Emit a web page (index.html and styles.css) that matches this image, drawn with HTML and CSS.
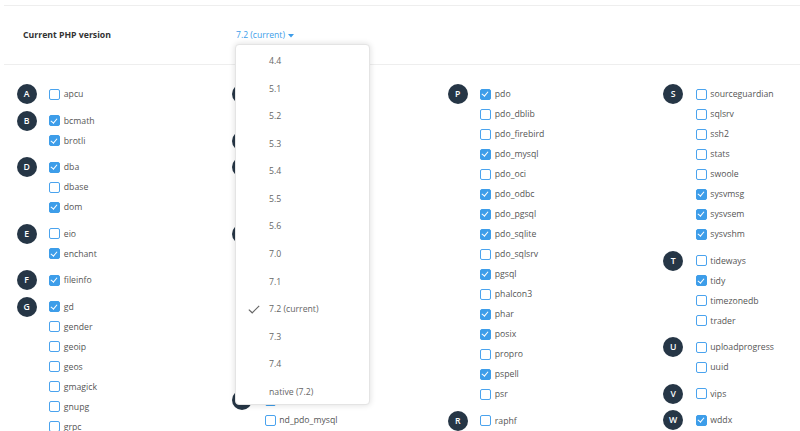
FILE: index.html
```html
<!DOCTYPE html>
<html lang="en">
<head>
<meta charset="utf-8">
<title>PHP Selector</title>
<link rel="stylesheet" href="styles.css">
</head>
<body>
<div class="page">
  <div class="version-row">
    <div class="version-label">Current PHP version</div>
    <div class="selector">
      <span class="selector-value">7.2 (current)</span>
      <svg class="caret" width="6" height="4" viewBox="0 0 6 4"><path d="M0 0 L6 0 L3 3.5 Z" fill="#3d9de9"/></svg>
      <ul class="menu">
        <li>4.4</li>
        <li>5.1</li>
        <li>5.2</li>
        <li>5.3</li>
        <li>5.4</li>
        <li>5.5</li>
        <li>5.6</li>
        <li>7.0</li>
        <li>7.1</li>
        <li class="selected"><svg class="tick" width="12" height="9" viewBox="0 0 12 9"><path d="M0.8 4.6 L4.2 7.8 L11.2 0.8" fill="none" stroke="#666" stroke-width="1.2"/></svg>7.2 (current)</li>
        <li>7.3</li>
        <li>7.4</li>
        <li>native (7.2)</li>
      </ul>
    </div>
  </div>

  <div class="columns">
    <div class="col">
      <div class="group"><span class="letter">A</span><div class="items">
        <label class="item"><span class="box"></span>apcu</label>
      </div></div>
      <div class="group"><span class="letter">B</span><div class="items">
        <label class="item"><span class="box on"></span>bcmath</label>
        <label class="item"><span class="box on"></span>brotli</label>
      </div></div>
      <div class="group"><span class="letter">D</span><div class="items">
        <label class="item"><span class="box on"></span>dba</label>
        <label class="item"><span class="box"></span>dbase</label>
        <label class="item"><span class="box on"></span>dom</label>
      </div></div>
      <div class="group"><span class="letter">E</span><div class="items">
        <label class="item"><span class="box"></span>eio</label>
        <label class="item"><span class="box on"></span>enchant</label>
      </div></div>
      <div class="group"><span class="letter">F</span><div class="items">
        <label class="item"><span class="box on"></span>fileinfo</label>
      </div></div>
      <div class="group"><span class="letter">G</span><div class="items">
        <label class="item"><span class="box on"></span>gd</label>
        <label class="item"><span class="box"></span>gender</label>
        <label class="item"><span class="box"></span>geoip</label>
        <label class="item"><span class="box"></span>geos</label>
        <label class="item"><span class="box"></span>gmagick</label>
        <label class="item"><span class="box"></span>gnupg</label>
        <label class="item"><span class="box"></span>grpc</label>
      </div></div>
    </div>

    <div class="col">
      <div class="group"><span class="letter">J</span><div class="items">
        <label class="item"><span class="box"></span>jsmin</label>
        <label class="item"><span class="box on"></span>json</label>
      </div></div>
      <div class="group"><span class="letter">K</span><div class="items">
        <label class="item"><span class="box"></span>krb5</label>
      </div></div>
      <div class="group"><span class="letter">L</span><div class="items">
        <label class="item"><span class="box"></span>ldap</label>
        <label class="item"><span class="box"></span>luasandbox</label>
        <label class="item"><span class="box"></span>lzf</label>
      </div></div>
      <div class="group"><span class="letter">M</span><div class="items">
        <label class="item"><span class="box"></span>mailparse</label>
        <label class="item"><span class="box on"></span>mbstring</label>
        <label class="item"><span class="box"></span>mcrypt</label>
        <label class="item"><span class="box"></span>memcache</label>
        <label class="item"><span class="box"></span>memcached</label>
        <label class="item"><span class="box"></span>mongodb</label>
        <label class="item"><span class="box"></span>msgpack</label>
        <label class="item"><span class="box"></span>mysqlnd</label>
      </div></div>
      <div class="group"><span class="letter">N</span><div class="items">
        <label class="item"><span class="box on"></span>nd_mysqli</label>
        <label class="item"><span class="box"></span>nd_pdo_mysql</label>
      </div></div>
    </div>

    <div class="col">
      <div class="group"><span class="letter">P</span><div class="items">
        <label class="item"><span class="box on"></span>pdo</label>
        <label class="item"><span class="box"></span>pdo_dblib</label>
        <label class="item"><span class="box"></span>pdo_firebird</label>
        <label class="item"><span class="box on"></span>pdo_mysql</label>
        <label class="item"><span class="box"></span>pdo_oci</label>
        <label class="item"><span class="box on"></span>pdo_odbc</label>
        <label class="item"><span class="box on"></span>pdo_pgsql</label>
        <label class="item"><span class="box on"></span>pdo_sqlite</label>
        <label class="item"><span class="box"></span>pdo_sqlsrv</label>
        <label class="item"><span class="box on"></span>pgsql</label>
        <label class="item"><span class="box"></span>phalcon3</label>
        <label class="item"><span class="box on"></span>phar</label>
        <label class="item"><span class="box on"></span>posix</label>
        <label class="item"><span class="box"></span>propro</label>
        <label class="item"><span class="box on"></span>pspell</label>
        <label class="item"><span class="box"></span>psr</label>
      </div></div>
      <div class="group"><span class="letter">R</span><div class="items">
        <label class="item"><span class="box"></span>raphf</label>
      </div></div>
    </div>

    <div class="col">
      <div class="group"><span class="letter">S</span><div class="items">
        <label class="item"><span class="box"></span>sourceguardian</label>
        <label class="item"><span class="box"></span>sqlsrv</label>
        <label class="item"><span class="box"></span>ssh2</label>
        <label class="item"><span class="box"></span>stats</label>
        <label class="item"><span class="box"></span>swoole</label>
        <label class="item"><span class="box on"></span>sysvmsg</label>
        <label class="item"><span class="box on"></span>sysvsem</label>
        <label class="item"><span class="box on"></span>sysvshm</label>
      </div></div>
      <div class="group"><span class="letter">T</span><div class="items">
        <label class="item"><span class="box"></span>tideways</label>
        <label class="item"><span class="box on"></span>tidy</label>
        <label class="item"><span class="box"></span>timezonedb</label>
        <label class="item"><span class="box"></span>trader</label>
      </div></div>
      <div class="group"><span class="letter">U</span><div class="items">
        <label class="item"><span class="box"></span>uploadprogress</label>
        <label class="item"><span class="box"></span>uuid</label>
      </div></div>
      <div class="group"><span class="letter">V</span><div class="items">
        <label class="item"><span class="box"></span>vips</label>
      </div></div>
      <div class="group"><span class="letter">W</span><div class="items">
        <label class="item"><span class="box on"></span>wddx</label>
      </div></div>
    </div>
  </div>
</div>
</body>
</html>
```
FILE: styles.css
```css
html, body {
  margin: 0;
  padding: 0;
  background: #fff;
  overflow: hidden;
}
body {
  font-family: "Open Sans", "Liberation Sans", sans-serif;
  color: #555;
  width: 800px;
  height: 431px;
}
.page {
  margin-left: 4px;
  padding-top: 5px;
}
.version-row {
  display: flex;
  align-items: center;
  height: 58px;
  border-top: 1px solid #eeeeee;
  border-bottom: 1px solid #eeeeee;
  padding-left: 19px;
}
.version-label {
  width: 213px;
  font-size: 8.7px;
  font-weight: 700;
  color: #333;
}
.selector {
  position: relative;
  display: flex;
  align-items: center;
  gap: 3px;
  color: #3d9de9;
  font-size: 8.6px;
}
.caret { margin-top: 1px; }
.menu {
  position: absolute;
  left: -1px;
  top: 15px;
  width: 133px;
  margin: 0;
  padding: 0;
  list-style: none;
  background: #fff;
  border: 1px solid #e4e4e4;
  border-radius: 4px;
  box-shadow: 0 0 6px rgba(0, 0, 0, 0.14);
  z-index: 5;
}
.menu li {
  position: relative;
  box-sizing: border-box;
  height: 27.58px;
  padding-top: 5px;
  line-height: 22.58px;
  padding-left: 33px;
  font-size: 8.7px;
  color: #666;
}
.tick {
  position: absolute;
  left: 12px;
  top: 12px;
}
.columns {
  display: flex;
  padding-left: 12.7px;
  padding-top: 19px;
}
.col {
  flex: none;
  width: 215.5px;
}
.group {
  display: flex;
  margin-bottom: 6.6px;
}
.letter {
  flex: none;
  width: 20px;
  height: 20px;
  border-radius: 50%;
  background: #263646;
  color: #fff;
  font-size: 8.7px;
  font-weight: 600;
  display: flex;
  align-items: center;
  justify-content: center;
}
.items {
  margin-left: 12.6px;
  display: flex;
  flex-direction: column;
}
.item {
  height: 20px;
  display: flex;
  align-items: center;
  gap: 3.5px;
  font-size: 8.7px;
  color: #555;
  white-space: nowrap;
}
.box {
  flex: none;
  box-sizing: border-box;
  width: 11px;
  height: 11px;
  border: 1.5px solid #4aa3ee;
  border-radius: 2px;
  background: #fff;
  position: relative;
}
.box.on {
  background: #3d9de9;
  border-color: #3d9de9;
}
.box.on::after {
  content: "";
  position: absolute;
  left: 2.2px;
  top: 0.6px;
  width: 2.6px;
  height: 5px;
  border-right: 1px solid #fff;
  border-bottom: 1px solid #fff;
  transform: rotate(40deg);
}
```
